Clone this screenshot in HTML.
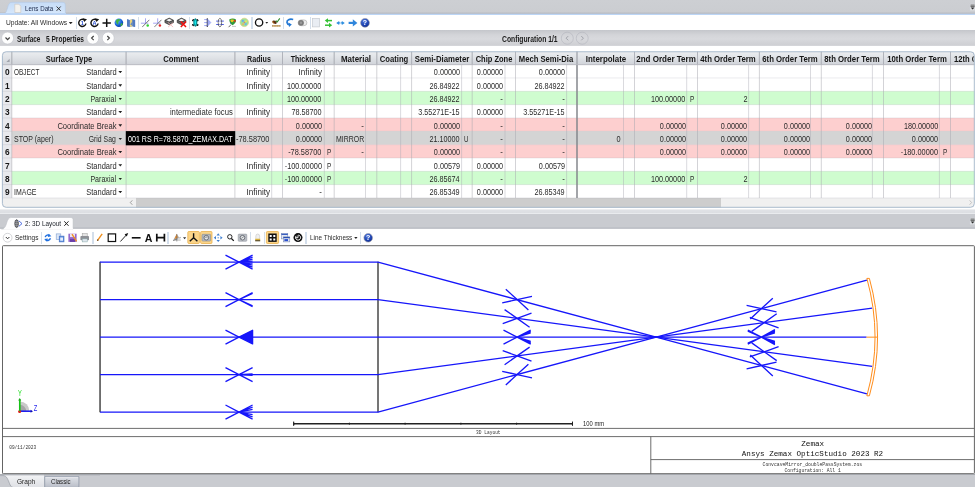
<!DOCTYPE html>
<html><head><meta charset="utf-8"><title>Lens Data</title>
<style>
html,body{margin:0;padding:0}
body{width:975px;height:487px;position:relative;overflow:hidden;background:#fff;font-family:"Liberation Sans", sans-serif}
.t{position:absolute;white-space:pre;line-height:12px;height:12px}
.sep{position:absolute;width:1.2px;background:#d3deeb}

.dd{position:absolute;width:3.8px;height:2.3px;background:#222;clip-path:polygon(0 0,100% 0,50% 100%)}
</style></head><body>
<div style="position:absolute;left:0;top:0;width:975px;height:14px;background:linear-gradient(#cdcfd3 0%,#cbcdd1 85%,#b9bcc2 94%,#b9bcc2 100%)"></div>
<svg style="position:absolute;left:0;top:0" width="80" height="15" viewBox="0 0 80 15">
<defs><linearGradient id="tg" x1="0" y1="0" x2="0" y2="1"><stop offset="0" stop-color="#c6dcf7"/><stop offset="1" stop-color="#d6e7fb"/></linearGradient></defs>
<path d="M2.5 14 C6 14 6.5 11 7.5 8 C8.5 4.5 9 2.3 12 2.3 L63 2.3 Q65.3 2.3 65.3 4.6 L65.3 14 Z" fill="url(#tg)" stroke="#b4c8e2" stroke-width="0.6"/>
<path d="M14.8 4.2h4l2 2v6.3h-6z" fill="#f4f2ee" stroke="#c9c5bd" stroke-width="0.6"/>
<path d="M56.6 6.5l4.1 4.3m0-4.3l-4.1 4.3" stroke="#2a2a2a" stroke-width="0.95" fill="none"/>
</svg>
<svg style="position:absolute;left:967.5px;top:2.6px" width="7.5" height="9" viewBox="0 0 7.5 9"><rect x="1.9" y="0.9" width="5.2" height="6.6" fill="#e3e5e8" opacity="0.7"/><path d="M2.5 2.1h4.2M2.5 3.4h4.2" stroke="#555" stroke-width="0.9"/><path d="M2.7 4.6h3.8l-1.9 2z" fill="#2a2a2a"/></svg>
<div style="position:absolute;left:0;top:13px;width:975px;height:17px;background:#fff;border-top:2px solid #bcd5f5;box-sizing:border-box"></div><div style="position:absolute;left:66px;top:13px;width:909px;height:1px;background:#b9c1cd"></div>
<div class="dd" style="left:68.8px;top:21.9px"></div>
<div class="sep" style="left:75.7px;top:16.5px;height:12.5px"></div>
<div class="sep" style="left:137.8px;top:16.5px;height:12.5px"></div>
<div class="sep" style="left:189.2px;top:16.5px;height:12.5px"></div>
<div class="sep" style="left:251.4px;top:16.5px;height:12.5px"></div>
<div class="sep" style="left:282.8px;top:16.5px;height:12.5px"></div>
<div class="sep" style="left:309.8px;top:16.5px;height:12.5px"></div>
<div style="position:absolute;left:0;top:30.2px;width:975px;height:15.8px;background:linear-gradient(#c4c6cb 0%,#d3d4d8 30%,#d8d9dd 55%,#cfd0d4 90%,#d6d7db 100%)"></div>
<svg style="position:absolute;left:0;top:30px" width="975" height="17" viewBox="0 30 975 17"><circle cx="7.6" cy="38.1" r="6.0" fill="#fefefe" stroke="#c3c5cb" stroke-width="0.6"/><path d="M5.5 37.5L7.6 39.6L9.7 37.5" fill="none" stroke="#444" stroke-width="1.2"/><circle cx="92.8" cy="38.1" r="6.0" fill="#fefefe" stroke="#c3c5cb" stroke-width="0.6"/><path d="M93.7 36.0L91.6 38.1L93.7 40.2" fill="none" stroke="#444" stroke-width="1.2"/><circle cx="108.2" cy="38.1" r="6.0" fill="#fefefe" stroke="#c3c5cb" stroke-width="0.6"/><path d="M107.3 36.0L109.4 38.1L107.3 40.2" fill="none" stroke="#444" stroke-width="1.2"/><circle cx="567.3" cy="38.2" r="6.0" fill="none" stroke="#b4b6bd" stroke-width="0.6"/><path d="M568.1999999999999 36.1L566.0999999999999 38.2L568.1999999999999 40.300000000000004" fill="none" stroke="#9a9ca3" stroke-width="0.9"/><circle cx="582.2" cy="38.2" r="6.0" fill="none" stroke="#b4b6bd" stroke-width="0.6"/><path d="M581.3000000000001 36.1L583.4000000000001 38.2L581.3000000000001 40.300000000000004" fill="none" stroke="#9a9ca3" stroke-width="0.9"/></svg>
<svg style="position:absolute;left:0;top:48px" width="975" height="162" viewBox="0 48 975 162">
<defs><clipPath id="tc"><rect x="2.0" y="51.35" width="972.7" height="156.35" rx="4" ry="4"/></clipPath><linearGradient id="hg" x1="0" y1="0" x2="0" y2="1"><stop offset="0" stop-color="#eceef1"/><stop offset="0.5" stop-color="#dfe2e6"/><stop offset="1" stop-color="#d0d3d9"/></linearGradient></defs>
<g clip-path="url(#tc)">
<rect x="2.00" y="51.35" width="972.70" height="156.35" fill="#fff" />
<rect x="2.00" y="51.35" width="972.70" height="13.30" fill="url(#hg)" />
<rect x="2.00" y="91.31" width="972.70" height="13.33" fill="#cffccf" />
<rect x="2.00" y="117.97" width="972.70" height="13.33" fill="#fdcfcf" />
<rect x="2.00" y="131.30" width="972.70" height="13.33" fill="#d4d4d4" />
<rect x="2.00" y="144.63" width="972.70" height="13.33" fill="#fdcfcf" />
<rect x="2.00" y="171.29" width="972.70" height="13.33" fill="#cffccf" />
<rect x="2.00" y="64.65" width="9.80" height="133.30" fill="#e8e9ed" />
<rect x="2.00" y="197.95" width="972.70" height="9.75" fill="#f0f0f0" />
<rect x="136.00" y="197.95" width="585.00" height="9.75" fill="#cdcdcd" />
<path d="M2.0 77.98H974.7M2.0 91.31H974.7M2.0 104.64H974.7M2.0 117.97H974.7M2.0 131.30H974.7M2.0 144.63H974.7M2.0 157.96H974.7M2.0 171.29H974.7M2.0 184.62H974.7M2.0 197.95H974.7" stroke="#9a9aa2" stroke-opacity="0.22" stroke-width="0.9" fill="none"/>
<path d="M11.8 51.35V197.95M126.1 51.35V197.95M234.9 51.35V197.95M282.5 51.35V197.95M334.2 51.35V197.95M376.8 51.35V197.95M411.6 51.35V197.95M472.2 51.35V197.95M515.5 51.35V197.95M634.5 51.35V197.95M697.5 51.35V197.95M759.4 51.35V197.95M821.3 51.35V197.95M883.5 51.35V197.95M950.5 51.35V197.95" stroke="#a8a8b0" stroke-opacity="0.5" stroke-width="1.0" fill="none"/>
<path d="M11.8 51.95V64.65M126.1 51.95V64.65M234.9 51.95V64.65M282.5 51.95V64.65M334.2 51.95V64.65M376.8 51.95V64.65M411.6 51.95V64.65M472.2 51.95V64.65M515.5 51.95V64.65M634.5 51.95V64.65M697.5 51.95V64.65M759.4 51.95V64.65M821.3 51.95V64.65M883.5 51.95V64.65M950.5 51.95V64.65" stroke="#a4a7af" stroke-opacity="0.6" stroke-width="1.0" fill="none"/>
<path d="M271.7 64.65V197.95M324.3 64.65V197.95M365.5 64.65V197.95M400.6 64.65V197.95M461.6 64.65V197.95M505.0 64.65V197.95M566.6 64.65V197.95M623.5 64.65V197.95M686.7 64.65V197.95M748.6 64.65V197.95M810.5 64.65V197.95M872.4 64.65V197.95M939.4 64.65V197.95" stroke="#a8a8b0" stroke-opacity="0.42" stroke-width="1.0" fill="none"/>
<path d="M577 51.35V64.65" stroke="#a0a3aa" stroke-width="1.3" fill="none"/><path d="M577 64.65V197.95" stroke="#85878d" stroke-width="1.5" fill="none"/>
<path d="M2.0 64.65H974.7" stroke="#b4b7be" stroke-width="0.9" fill="none"/>
<rect x="125.80" y="131.10" width="109.40" height="14.23" fill="#000" />
<path d="M132.3 200.35L130.3 202.55L132.3 204.75" stroke="#8a8a8a" stroke-width="0.8" fill="none"/><path d="M969.6 200.35L971.6 202.55L969.6 204.75" stroke="#b8b8b8" stroke-width="0.8" fill="none"/>
<path d="M9.6 62.05v-3.2l-3.2 3.2z" fill="#a0a3ab"/>
</g>
<rect x="2.4" y="51.75" width="971.9000000000001" height="155.54999999999998" rx="3.8" ry="3.8" fill="none" stroke="#a3b5c9" stroke-width="0.9"/>
</svg>
<div class="dd" style="left:118.4px;top:71.02px"></div>
<div class="dd" style="left:118.4px;top:84.35px"></div>
<div class="dd" style="left:118.4px;top:97.68px"></div>
<div class="dd" style="left:118.4px;top:111.01px"></div>
<div class="dd" style="left:118.4px;top:124.34px"></div>
<div class="dd" style="left:118.4px;top:137.66px"></div>
<div class="dd" style="left:118.4px;top:150.99px"></div>
<div class="dd" style="left:118.4px;top:164.32px"></div>
<div class="dd" style="left:118.4px;top:177.66px"></div>
<div class="dd" style="left:118.4px;top:190.98px"></div>
<svg style="position:absolute;left:0;top:208px" width="975" height="22" viewBox="0 208 975 22"><defs><linearGradient id="bg2" x1="0" y1="0" x2="0" y2="1"><stop offset="0" stop-color="#e6e8eb"/><stop offset="0.3" stop-color="#dfe1e5"/><stop offset="1" stop-color="#dcdee2"/></linearGradient></defs><rect x="0" y="209.3" width="975" height="4" fill="url(#bg2)"/><rect x="0" y="213.0" width="975" height="0.9" fill="#f2f3f5"/><rect x="0" y="213.8" width="975" height="14.8" fill="#c9cbd0"/><rect x="0" y="227.6" width="975" height="1" fill="#b2b5bb"/></svg>
<svg style="position:absolute;left:0;top:213px" width="90" height="17" viewBox="0 213 90 17">
<path d="M1.5 229 C4.6 229 5.6 226.4 6.6 223.2 C7.6 220 8.4 217.5 11.4 217.5 L71 217.5 Q73.1 217.5 73.1 219.6 L73.1 229 Z" fill="#fdfdfe" stroke="#b9bcc2" stroke-width="0.5"/>
<rect x="4.2" y="227.9" width="68.6" height="1.6" fill="#fdfdfe"/>
<ellipse cx="16.6" cy="223.6" rx="1.8" ry="3.9" fill="#77797f" stroke="#2f3136" stroke-width="0.7"/>
<path d="M15.2 221.6h2.8M15 223.6h3.2M15.2 225.6h2.8" stroke="#c4c6ca" stroke-width="0.4"/>
<path d="M18.8 220.8L22 223.6L18.8 226.4" fill="none" stroke="#3d5fe0" stroke-width="0.9"/>
<path d="M64.3 221.3l4.2 4.5m0-4.5l-4.2 4.5" stroke="#222" stroke-width="1.0" fill="none"/>
</svg>
<svg style="position:absolute;left:967.5px;top:217.2px" width="7.5" height="9" viewBox="0 0 7.5 9"><rect x="1.9" y="0.9" width="5.2" height="6.6" fill="#e3e5e8" opacity="0.7"/><path d="M2.5 2.1h4.2M2.5 3.4h4.2" stroke="#555" stroke-width="0.9"/><path d="M2.7 4.6h3.8l-1.9 2z" fill="#2a2a2a"/></svg>
<div class="dd" style="left:354px;top:236.8px"></div>
<div class="sep" style="left:40.6px;top:231.5px;height:12.5px"></div>
<div class="sep" style="left:92.4px;top:231.5px;height:12.5px"></div>
<div class="sep" style="left:167.4px;top:231.5px;height:12.5px"></div>
<div class="sep" style="left:250.0px;top:231.5px;height:12.5px"></div>
<div class="sep" style="left:264.0px;top:231.5px;height:12.5px"></div>
<div class="sep" style="left:305.4px;top:231.5px;height:12.5px"></div>
<div class="sep" style="left:359.8px;top:231.5px;height:12.5px"></div>
<svg style="position:absolute;left:0;top:240px;will-change:transform" width="975" height="240" viewBox="0 240 975 240">
<rect x="2.5" y="245.7" width="971.9" height="228" rx="0.8" fill="#fff" stroke="#5c5c5c" stroke-width="0.95"/>
<path d="M2.6 428.4H974.4M2.6 436.6H974.4M650.8 436.6V473.7M650.8 459.6H974.4" stroke="#5c5c5c" stroke-width="0.9" fill="none"/>
<path d="M100.05 261.84999999999997V412.35M378.0 261.84999999999997V412.35" stroke="#484848" stroke-width="1.5" fill="none"/>
<g stroke="#1616fa" stroke-width="1.3" fill="none" stroke-linecap="butt" stroke-linejoin="round">
<path d="M100.05 262.15H378.0L656.2 337.1L866.9 280.2"/>
<path d="M100.05 299.65H378.0L656.2 337.1L872.2 308.1"/>
<path d="M100.05 337.15H378.0L656.2 337.1L866.5 337.15"/>
<path d="M100.05 374.65H378.0L656.2 337.1L872.2 366.4"/>
<path d="M100.05 412.05H378.0L656.2 337.1L866.9 393.9"/>
<path d="M239.0 262.1L225.5 269.2M239.0 262.1L225.5 255.1"/>
<path d="M239.0 262.1L252.6 269.2M239.0 262.1L252.6 255.1M239.0 262.1L252.6 267.1M239.0 262.1L252.6 257.2M239.0 262.1L252.6 265.1M239.0 262.1L252.6 259.2M239.0 262.1L252.6 263.2M239.0 262.1L252.6 261.1"/>
<path d="M517.1 299.6L502.2 302.9M517.1 299.6L505.8 289.3"/>
<path d="M517.1 299.6L528.4 310.0M517.1 299.6L532.0 296.3"/>
<path d="M761.5 308.6L750.3 319.0M761.5 308.6L746.6 305.4"/>
<path d="M761.5 308.6L776.5 311.9M761.5 308.6L772.8 298.3"/>
<path d="M239.0 299.6L225.5 306.7M239.0 299.6L225.5 292.6"/>
<path d="M239.0 299.6L252.6 306.7M239.0 299.6L252.6 292.6M239.0 299.6L252.6 305.9M239.0 299.6L252.6 293.4"/>
<path d="M517.1 318.4L502.7 323.6M517.1 318.4L504.6 309.6"/>
<path d="M517.1 318.4L529.6 327.2M517.1 318.4L531.5 313.2"/>
<path d="M764.2 322.6L751.7 331.4M764.2 322.6L749.8 317.4"/>
<path d="M764.2 322.6L778.6 327.8M764.2 322.6L776.7 313.8"/>
<path d="M239.0 337.1L225.5 344.2M239.0 337.1L225.5 330.1"/>
<path d="M239.0 337.1L252.6 330.3V343.9Z" fill="#1616fa"/>
<path d="M517.1 337.1L503.5 344.2M517.1 337.1L503.5 330.1"/>
<path d="M517.1 337.1L530.7 344.2M517.1 337.1L530.7 330.1M517.1 337.1L530.7 343.5M517.1 337.1L530.7 330.8M517.1 337.1L530.7 342.8M517.1 337.1L530.7 331.5M517.1 337.1L530.7 342.1M517.1 337.1L530.7 332.2M517.1 337.1L530.7 341.4M517.1 337.1L530.7 332.9"/>
<path d="M761.4 337.1L747.8 344.2M761.4 337.1L747.8 330.1M761.4 337.1L747.8 343.6M761.4 337.1L747.8 330.6M761.4 337.1L747.8 343.1M761.4 337.1L747.8 331.2"/>
<path d="M761.4 337.1L774.9 344.8M761.4 337.1L774.9 329.5M761.4 337.1L774.9 344.2M761.4 337.1L774.9 330.1M761.4 337.1L774.9 343.5M761.4 337.1L774.9 330.8M761.4 337.1L774.9 342.8M761.4 337.1L774.9 331.5M761.4 337.1L774.9 342.1M761.4 337.1L774.9 332.2M761.4 337.1L774.9 341.4M761.4 337.1L774.9 332.9"/>
<path d="M239.0 374.6L225.5 381.7M239.0 374.6L225.5 367.6"/>
<path d="M239.0 374.6L252.6 381.7M239.0 374.6L252.6 367.6M239.0 374.6L252.6 375.4M239.0 374.6L252.6 373.9"/>
<path d="M517.1 355.9L504.6 364.7M517.1 355.9L502.7 350.7"/>
<path d="M517.1 355.9L531.5 361.1M517.1 355.9L529.6 347.1"/>
<path d="M764.2 351.8L749.8 356.9M764.2 351.8L751.7 342.9"/>
<path d="M764.2 351.8L776.7 360.6M764.2 351.8L778.6 346.6"/>
<path d="M239.0 412.1L225.5 419.1M239.0 412.1L225.5 405.0"/>
<path d="M239.0 412.1L252.6 419.1M239.0 412.1L252.6 405.0M239.0 412.1L252.6 416.9M239.0 412.1L252.6 407.2M239.0 412.1L252.6 414.7M239.0 412.1L252.6 409.4"/>
<path d="M517.1 374.6L505.8 384.9M517.1 374.6L502.2 371.3"/>
<path d="M517.1 374.6L532.0 377.9M517.1 374.6L528.4 364.2"/>
<path d="M761.5 365.5L746.6 368.8M761.5 365.5L750.3 355.1"/>
<path d="M761.5 365.5L772.8 375.9M761.5 365.5L776.5 362.2"/>
</g>
<path d="M647.2 337.1L652.2 336.20000000000005L656.2 337.1L660.2 336.20000000000005L665.2 337.1L660.2 338.0L656.2 337.1L652.2 338.0Z" fill="#1616fa" opacity="0.9"/>
<g stroke="#ff8c1a" stroke-width="1.0" fill="none"><path d="M866.89 278.40A219.0 219.0 0 0 1 866.89 395.80"/><path d="M869.39 278.40A219.0 219.0 0 0 1 869.39 395.80"/>
<path d="M866.89 278.40h2.5M866.89 395.80h2.5M866.5 337.15H877.4"/></g>
<path d="M293.6 423.7H572.6" stroke="#222" stroke-width="1.4" fill="none"/><path d="M293.7 421.6v4.2M572.5 421.6v4.2M349.4 422.7v2M405.1 422.7v2M460.9 422.7v2M516.6 422.7v2" stroke="#222" stroke-width="1.0" fill="none"/><path d="M572.9 421.5v4.4l-1.6-2.2zM293.3 421.5v4.4l1.6-2.2z" fill="#222"/>
<path d="M19.8 411.2 L19.8 401.5 A9.6 9.6 0 0 1 29.4 411.2Z" fill="#c9c9c9"/><path d="M19.8 411.2 L19.8 404.8 A6.4 6.4 0 0 1 26.2 411.2Z" fill="#a5a5a5"/>
<path d="M19.7 411.2V399.5" stroke="#19c219" stroke-width="1.5"/><path d="M18.2 400.4L19.7 398L21.2 400.4Z" fill="#159a15"/>
<path d="M19.7 411.2H31.2" stroke="#1414f0" stroke-width="1.5"/><path d="M30.6 409.7L33 411.2L30.6 412.7Z" fill="#0e0eb0"/>
<circle cx="19.6" cy="411.6" r="1.5" fill="#e01515"/><path d="M19.7 411.2V399.5" stroke="#19c219" stroke-width="1.3"/>
<text x="18.1" y="395.7" font-family="Liberation Sans, sans-serif" font-size="9" fill="#22dd22" textLength="3.8" lengthAdjust="spacingAndGlyphs">Y</text>
<text x="33.8" y="410.8" font-family="Liberation Sans, sans-serif" font-size="9" fill="#2a2aee" textLength="3.5" lengthAdjust="spacingAndGlyphs">Z</text>
<text x="583.1" y="425.7" font-family="Liberation Sans, sans-serif" font-size="6.4" fill="#222" textLength="21" lengthAdjust="spacingAndGlyphs">100 mm</text>
<text x="476.0" y="434.2" font-family="Liberation Mono, monospace" font-size="4.6" text-anchor="start" fill="#333" textLength="24.6" lengthAdjust="spacingAndGlyphs" xml:space="preserve">3D Layout</text>
<text x="9.2" y="449.0" font-family="Liberation Mono, monospace" font-size="4.6" text-anchor="start" fill="#333" textLength="27.0" lengthAdjust="spacingAndGlyphs" xml:space="preserve">09/11/2023</text>
<text x="801.2" y="445.6" font-family="Liberation Mono, monospace" font-size="7.6" text-anchor="start" fill="#111" textLength="23.0" lengthAdjust="spacingAndGlyphs" xml:space="preserve">Zemax</text>
<text x="741.8" y="455.9" font-family="Liberation Mono, monospace" font-size="7.6" text-anchor="start" fill="#111" textLength="141.4" lengthAdjust="spacingAndGlyphs" xml:space="preserve">Ansys Zemax OpticStudio 2023 R2</text>
<text x="762.6" y="465.7" font-family="Liberation Mono, monospace" font-size="4.7" text-anchor="start" fill="#333" textLength="99.5" lengthAdjust="spacingAndGlyphs" xml:space="preserve">ConvcaveMirror_doublePassSystem.zos</text>
<text x="784.5" y="471.7" font-family="Liberation Mono, monospace" font-size="4.7" text-anchor="start" fill="#333" textLength="56.3" lengthAdjust="spacingAndGlyphs" xml:space="preserve">Configuration: All 1</text>
</svg>
<div style="position:absolute;left:0;top:474px;width:975px;height:13px;background:#c9cbd0;border-top:1px solid #a4a7ad;box-sizing:border-box"></div>
<svg style="position:absolute;left:0;top:474px" width="100" height="13" viewBox="0 474 100 13">
<defs><linearGradient id="tg3" x1="0" y1="0" x2="0" y2="1"><stop offset="0" stop-color="#f3f4f6"/><stop offset="1" stop-color="#dfe1e5"/></linearGradient>
<linearGradient id="tg4" x1="0" y1="0" x2="0" y2="1"><stop offset="0" stop-color="#dfe2e8"/><stop offset="1" stop-color="#b9bec8"/></linearGradient></defs>
<path d="M0 475.6 L3 475.6 C7 475.6 8 480 9.5 483.5 C10.3 485.6 11 487 12.5 487 L44 487 L44 474.6 L0 474.6Z" fill="url(#tg3)"/>
<path d="M0 475.6 L3 475.6 C7 475.6 8 480 9.5 483.5 C10.3 485.6 11 487 12.5 487" fill="none" stroke="#8e939c" stroke-width="0.6"/>
<path d="M44.7 476.6 H78.9 V487.4 H44.7 Z" fill="url(#tg4)" stroke="#8790a2" stroke-width="0.7"/><path d="M45.5 477.4H78.1" stroke="#eef0f4" stroke-width="0.6"/><rect x="0" y="474.2" width="100" height="1.1" fill="#a4a7ad"/>
</svg>
<svg style="position:absolute;left:0;top:14px;will-change:transform" width="975" height="17" viewBox="0 14 975 17">
<defs><radialGradient id="gl" cx="0.35" cy="0.3" r="0.8"><stop offset="0" stop-color="#6fb4ff"/><stop offset="0.6" stop-color="#1560d8"/><stop offset="1" stop-color="#0a2f8c"/></radialGradient><radialGradient id="hp" cx="0.4" cy="0.3" r="0.8"><stop offset="0" stop-color="#4f79e0"/><stop offset="0.7" stop-color="#153aa8"/><stop offset="1" stop-color="#0a1f6e"/></radialGradient></defs>
<path d="M84.5 20.0A3.6 3.6 0 1 0 85.89999999999999 23.5" fill="none" stroke="#111" stroke-width="1.45"/>
<path d="M82.89999999999999 18.299999999999997L87.0 19.299999999999997L84.2 22.0Z" fill="#111"/>
<text x="82.3" y="25.0" font-family="Liberation Sans, sans-serif" font-size="5.6" font-weight="bold" text-anchor="middle" fill="#2b4fd0">1</text>
<path d="M96.7 20.0A3.6 3.6 0 1 0 98.1 23.5" fill="none" stroke="#111" stroke-width="1.45"/>
<path d="M95.1 18.299999999999997L99.2 19.299999999999997L96.4 22.0Z" fill="#111"/>
<text x="94.5" y="25.0" font-family="Liberation Sans, sans-serif" font-size="5.6" font-weight="bold" text-anchor="middle" fill="#2b4fd0">A</text>
<path d="M102.5 22.9H110.9M106.7 18.7V27.1" stroke="#111" stroke-width="1.5"/>
<circle cx="118.9" cy="22.8" r="4.3" fill="url(#gl)"/><path d="M116.3 20.2c1-1.2 2.6-1.4 3.6-0.6c0.4 1-0.6 1.6-1.4 2.2c-0.6 0.8 0.4 1.8-0.4 2.8c-1-0.2-1.2-1.4-1.8-2.2c-0.6-0.6-0.6-1.4 0-2.2zM120.8 23.4c0.8-0.4 1.8 0 1.9 0.8c-0.3 1-1 1.7-1.8 1.9c-0.5-0.8-0.5-1.9-0.1-2.7z" fill="#3fb443"/>
<path d="M127 19.2l2.7 0.9l2.7-0.9l2.7 0.9v7l-2.7-0.9l-2.7 0.9l-2.7-0.9z" fill="#6a90cf"/><path d="M129.7 20.1l2.7-0.9v7l-2.7 0.9z" fill="#e9d37c"/><path d="M127 19.2l2.7 0.9v7l-2.7-0.9zM132.4 19.2l2.7 0.9v7l-2.7-0.9z" fill="#4f78bf" opacity="0.9"/><path d="M130.3 24.5l1.5-2.6v3.6z" fill="#4a7fd0"/>
<path d="M140.9 23.2H148.29999999999998M145.5 18.3V23.2" stroke="#9c9cf2" stroke-width="0.9" fill="none"/><path d="M142.2 26.9L149.2 19.8" stroke="#555" stroke-width="0.7"/><path d="M142.7 27.2L149.7 20.1" stroke="#c8c8c8" stroke-width="0.6"/>
<circle cx="147.7" cy="25.4" r="1.25" fill="#2fd02f"/>
<path d="M153.10000000000002 23.2H160.5M157.70000000000002 18.3V23.2" stroke="#9c9cf2" stroke-width="0.9" fill="none"/><path d="M154.4 26.9L161.4 19.8" stroke="#555" stroke-width="0.7"/><path d="M154.9 27.2L161.9 20.1" stroke="#c8c8c8" stroke-width="0.6"/>
<circle cx="159.9" cy="25.4" r="1.25" fill="#e02a2a"/>
<path d="M164.9 20.2L169.20000000000002 18.1L173.5 20.2V22.6L169.20000000000002 24.7L164.9 22.6Z" fill="#4a4a4a" stroke="#2e2e2e" stroke-width="0.6"/><path d="M166.20000000000002 20.2L169.20000000000002 18.8L172.20000000000002 20.2L169.20000000000002 21.6Z" fill="#f4f4f4"/><path d="M165.5 21.6L169.20000000000002 23.4L172.9 21.6" stroke="#9a9a9a" stroke-width="0.5" fill="none"/>
<path d="M168.1 22.6L173.1 27M173.1 22.6L168.1 27" stroke="#f4b4b4" stroke-width="0.8"/>
<path d="M177.2 20.2L181.5 18.1L185.79999999999998 20.2V22.6L181.5 24.7L177.2 22.6Z" fill="#4a4a4a" stroke="#2e2e2e" stroke-width="0.6"/><path d="M178.5 20.2L181.5 18.8L184.5 20.2L181.5 21.6Z" fill="#f4f4f4"/><path d="M177.79999999999998 21.6L181.5 23.4L185.2 21.6" stroke="#9a9a9a" stroke-width="0.5" fill="none"/>
<path d="M180.79999999999998 21.6L186.0 27.1M186.0 21.6L180.79999999999998 27.1" stroke="#ee1111" stroke-width="1.5"/>
<path d="M193 21.2l-0.6-1.2l1.4-0.6zM197.6 21.2l0.6-1.2l-1.4-0.6zM193 24l-0.6 1.2l1.4 0.6zM197.6 24l0.6 1.2l-1.4 0.6z" fill="#111" stroke="#111" stroke-width="0.9"/><path d="M195.3 17.9L197.3 20.6V24.4L195.3 27L193.3 24.4V20.6Z" fill="#0a8f92"/><ellipse cx="195.3" cy="22.5" rx="0.8" ry="2.4" fill="#19e8ee"/>
<path d="M204.2 19.6H207.4M204.2 22.6H207.4M204.2 25.6H207.4" stroke="#8f9af4" stroke-width="0.9"/><path d="M207.3 18.3V27" stroke="#3a3a44" stroke-width="1.1"/><path d="M207.9 19.4L210.9 22.6L207.9 25.8Z" fill="#aab4f6" stroke="#7f8cf0" stroke-width="0.5"/>
<path d="M216.2 21.1H223.8M216.2 24.5H223.8" stroke="#4a5ae0" stroke-width="1.0"/><ellipse cx="219.9" cy="22.6" rx="1.7" ry="4.3" fill="none" stroke="#555" stroke-width="0.8"/><ellipse cx="219.9" cy="22.6" rx="1.0" ry="3.4" fill="#f4f4f8" opacity="0.55"/>
<path d="M229.2 19.6c2-1.2 4.8-1.4 6.8 0c0.4 2.2-1 4.6-3.4 5.6c-1.6-0.6-3.2-2.8-3.4-5.6z" fill="#2e9a3a"/><path d="M230.4 20c1.2-0.6 2.6-0.6 3.6 0c-0.2 1.2-1 2-1.9 2.2c-0.9-0.3-1.6-1.1-1.7-2.2z" fill="#f0c020"/><path d="M233.8 20.2c0.8-0.3 1.6-0.2 2 0.2c-0.1 0.9-0.6 1.6-1.2 2z" fill="#e03020"/><path d="M229.6 21.4c0.5 1 1 1.6 1.6 2l-0.6 0.6z" fill="#2050d0"/><path d="M231 24.6L228.6 27.2" stroke="#555" stroke-width="0.9"/><path d="M232 26.4H236" stroke="#b0b0b0" stroke-width="0.7"/>
<circle cx="244.3" cy="22.4" r="4.2" fill="#9be29b" stroke="#dcd080" stroke-width="0.7"/><circle cx="242.8" cy="20.9" r="1.1" fill="#6aa8f0"/><circle cx="246" cy="21.2" r="1.0" fill="#f0e060"/><circle cx="243" cy="24.2" r="1.0" fill="#f0b060"/><circle cx="245.8" cy="24.2" r="1.1" fill="#70b8e8"/><circle cx="244.4" cy="22.5" r="0.8" fill="#f07070"/>
<circle cx="259.1" cy="22.5" r="3.65" fill="none" stroke="#111" stroke-width="1.35"/><path d="M265.4 22h2.8l-1.4 1.7z" fill="#222"/>
<path d="M272 25.9H280.6" stroke="#c9923a" stroke-width="1.3"/><path d="M272 25.9H280.6" stroke="#8a8a8a" stroke-width="1.3" stroke-dasharray="1.2 1.2" opacity="0.6"/><ellipse cx="274.5" cy="22.2" rx="2.4" ry="1.5" transform="rotate(25 274.5 22.2)" fill="#5a2f14"/><path d="M272.6 21.2l1.2 2.6" stroke="#e88a2a" stroke-width="0.7"/><path d="M275.8 20.6L277.2 22L279.8 18.4" fill="none" stroke="#2f8a2f" stroke-width="1.1"/>
<path d="M293.2 19.5C289.5 18.6 286.6 20 287 22.6C287.3 24 288.4 24.6 289.4 24.6" fill="none" stroke="#2378d4" stroke-width="1.7"/><path d="M288.4 22.4L291.8 24.4L289 27Z" fill="#2378d4"/>
<rect x="298.1" y="19.9" width="8.8" height="5.8" rx="2.9" fill="#ececec" stroke="#a8a8a8" stroke-width="0.6"/><circle cx="301" cy="22.8" r="2.9" fill="#7a7a7a"/><circle cx="301" cy="22.8" r="1.2" fill="#9a9a9a"/>
<rect x="312.6" y="18.5" width="6.8" height="8.4" fill="#e9edf3" stroke="#c5c9d0" stroke-width="0.7"/>
<path d="M332 20.6H327.2" stroke="#34c034" stroke-width="1.5"/><path d="M328 18.2L324.8 20.6L328 23Z" fill="#34c034"/><path d="M325 25.2H329.8" stroke="#34c034" stroke-width="1.5"/><path d="M329 22.8L332.2 25.2L329 27.6Z" fill="#34c034"/>
<path d="M338.4 22.9H342.6" stroke="#2f8fe0" stroke-width="1.3"/><path d="M339.2 20.9L336.2 22.9L339.2 24.9ZM341.8 20.9L344.8 22.9L341.8 24.9Z" fill="#2f8fe0"/><circle cx="340.5" cy="22.9" r="0.7" fill="#fff"/>
<path d="M348.6 22.9H353.6" stroke="#2f86dc" stroke-width="2.2"/><path d="M352.8 19.2L357.4 22.9L352.8 26.6Z" fill="#2f86dc"/>
<circle cx="365" cy="22.8" r="4.4" fill="url(#hp)" stroke="#9a9aa8" stroke-width="0.6"/><text x="365" y="25.4" font-family="Liberation Sans, sans-serif" font-size="7" font-weight="bold" text-anchor="middle" fill="#fff">?</text>
</svg>
<svg style="position:absolute;left:0;top:229px;will-change:transform" width="975" height="17" viewBox="0 229 975 17">
<circle cx="7.6" cy="237.7" r="4.4" fill="#fff" stroke="#c2c3c7" stroke-width="0.7"/><path d="M5.8 237.0L7.6 238.79999999999998L9.4 237.0" fill="none" stroke="#333" stroke-width="1.0"/>
<path d="M45.2 237.1A3 3 0 0 1 49.8 235.5" fill="none" stroke="#1f6fe0" stroke-width="1.5"/><path d="M48.6 233.7L51.4 236.29999999999998L47.8 236.89999999999998Z" fill="#1f6fe0"/><path d="M50.4 238.29999999999998A3 3 0 0 1 45.8 239.89999999999998" fill="none" stroke="#1f6fe0" stroke-width="1.5"/><path d="M47 241.7L44.2 239.1L47.8 238.5Z" fill="#1f6fe0"/>
<rect x="56.2" y="233.89999999999998" width="4.6" height="5.6" fill="#dfe8f6" stroke="#7f9fd0" stroke-width="0.6"/><rect x="59.2" y="236.1" width="4.8" height="5.8" fill="#5f8fe0" stroke="#3f6fc0" stroke-width="0.6"/><rect x="60.2" y="237.5" width="2.8" height="3.2" fill="#e8f0fc"/>
<rect x="68.4" y="233.7" width="8.2" height="8.2" fill="#9468cc"/><rect x="70" y="233.7" width="5" height="3.4" fill="#ece6f4"/><rect x="70" y="239.1" width="5" height="2.8" fill="#6a3fa8"/><path d="M72 234.1L76.6 241.29999999999998" stroke="#f09020" stroke-width="1.3"/>
<rect x="82.2" y="233.7" width="5" height="3" fill="#e4e4e4" stroke="#999" stroke-width="0.5"/><rect x="80.4" y="236.1" width="8.6" height="4.2" rx="0.8" fill="#8d9096"/><rect x="82.2" y="238.89999999999998" width="5" height="3" fill="#dfe6ee" stroke="#8aa" stroke-width="0.5"/>
<path d="M97.4 240.6L102.2 233.79999999999998" stroke="#f0901e" stroke-width="1.4"/><path d="M97.4 240.6l0.7-1" stroke="#5a3a1a" stroke-width="1.2"/>
<rect x="108.2" y="233.89999999999998" width="7.4" height="7.6" fill="none" stroke="#111" stroke-width="1.2"/>
<path d="M120.4 241.5L126.6 234.7" stroke="#111" stroke-width="0.9"/><path d="M128.2 233.1L124.6 234.29999999999998L126.8 236.5Z" fill="#111"/>
<path d="M131.8 237.79999999999998H140.6" stroke="#111" stroke-width="1.6"/>
<text x="148.7" y="241.6" font-family="Liberation Sans, sans-serif" font-size="10.6" font-weight="bold" text-anchor="middle" fill="#111">A</text>
<path d="M156.8 233.79999999999998V241.6M164.4 233.79999999999998V241.6M156.8 237.7H164.4" stroke="#111" stroke-width="1.7" fill="none"/>
<path d="M176.8 233.7L173 240.5L180.8 240.5Z" fill="#a8a8a8"/><path d="M176.8 233.7L174.6 238.7L177.6 237.89999999999998Z" fill="#f08a1e"/><path d="M176.8 234.1V241.5M173 240.7L180.8 237.29999999999998" stroke="#6a6a6a" stroke-width="0.6"/><circle cx="179" cy="239.1" r="1.6" fill="#d8d8d8"/>
<path d="M183 237.29999999999998h3.2l-1.6 2z" fill="#333"/>
<rect x="187.8" y="231.5" width="11.6" height="12" rx="1" fill="#fbd58a" stroke="#e8ab3c" stroke-width="0.7"/>
<path d="M193.6 233.29999999999998V237.7M193.6 237.7L189.8 241.29999999999998M193.6 237.7L197.4 241.29999999999998" stroke="#111" stroke-width="1.4" fill="none"/>
<rect x="200.6" y="231.5" width="11.4" height="12" rx="1" fill="#fbd58a" stroke="#e8ab3c" stroke-width="0.7"/>
<rect x="202" y="234.29999999999998" width="8.6" height="6.8" rx="0.8" fill="#b4b9c0" stroke="#7a7e86" stroke-width="0.5"/><circle cx="206.3" cy="237.7" r="2.3" fill="#e4e7ea" stroke="#4a4e56" stroke-width="0.7"/><path d="M205.2 237.7a1.2 1.2 0 0 1 2.2 0" fill="none" stroke="#444" stroke-width="0.6"/>
<path d="M218.2 233.29999999999998L219.89999999999998 235.5H216.5ZM218.2 242.1L219.89999999999998 239.89999999999998H216.5ZM213.79999999999998 237.7L216.0 236.0V239.39999999999998ZM222.6 237.7L220.39999999999998 236.0V239.39999999999998Z" fill="#3f7fd0"/><circle cx="218.2" cy="237.7" r="0.8" fill="#7aa8e0"/>
<circle cx="229.8" cy="236.79999999999998" r="2.2" fill="none" stroke="#111" stroke-width="0.9"/><path d="M231.4 238.5L233.8 240.89999999999998" stroke="#111" stroke-width="1.2"/>
<rect x="238.2" y="234.1" width="8.6" height="7.2" rx="0.8" fill="#b9bdc4" stroke="#8a8e96" stroke-width="0.5"/><circle cx="242.5" cy="237.7" r="2.3" fill="#e6e9ec" stroke="#4a4e56" stroke-width="0.7"/><path d="M241.2 238.5L243.8 236.7" stroke="#555" stroke-width="0.6"/>
<path d="M255.8 238.7V236.29999999999998A1.9 2.3 0 0 1 259.6 236.29999999999998V238.7" fill="#f0f0f0" stroke="#c4c4c4" stroke-width="0.6"/><rect x="255.2" y="238.7" width="5" height="1.7" fill="#d6ae3a"/><rect x="255.2" y="240.2" width="5" height="1.1" fill="#4a3c14"/>
<rect x="266.4" y="231.5" width="12.2" height="12" rx="1" fill="#fbd58a" stroke="#e8ab3c" stroke-width="0.7"/>
<rect x="268.3" y="233.5" width="8.4" height="8.4" fill="#111"/><path d="M269.7 234.89999999999998h2v2h-2zM273.3 234.89999999999998h2v2h-2zM269.7 238.5h2v2h-2zM273.3 238.5h2v2h-2z" fill="#fff"/>
<rect x="281.4" y="233.7" width="6.4" height="5.2" fill="#e4e9f4" stroke="#6a7fb0" stroke-width="0.5"/><rect x="281.4" y="233.7" width="6.4" height="1.3" fill="#3a5fc0"/><rect x="283.4" y="236.89999999999998" width="6.4" height="5" fill="#dfe4f0" stroke="#6a7fb0" stroke-width="0.5"/><rect x="283.4" y="236.89999999999998" width="6.4" height="1.3" fill="#2a4fb0"/><rect x="284.4" y="239.1" width="3.6" height="2" fill="#2a4fd0"/>
<circle cx="298" cy="237.6" r="4.5" fill="#111"/><path d="M296.2 235.89999999999998A2.5 2.5 0 1 0 298.4 235.1" fill="none" stroke="#fff" stroke-width="1"/><path d="M298 235.29999999999998V237.7H296" fill="none" stroke="#fff" stroke-width="0.9"/>
<circle cx="368.2" cy="237.79999999999998" r="4.3" fill="url(#hp)" stroke="#9a9aa8" stroke-width="0.6"/><text x="368.2" y="240.39999999999998" font-family="Liberation Sans, sans-serif" font-size="7" font-weight="bold" text-anchor="middle" fill="#fff">?</text>
</svg>
<div style="position:absolute;left:0;top:0;width:975px;height:487px;will-change:transform">
<span class="t" id="t0" style="font-size:8.1px;color:#1c2a4c;left:25.00px;transform-origin:0 50%;transform:scaleX(0.7668);top:2.70px;">Lens Data</span>
<span class="t" id="t1" style="font-size:8.1px;color:#2b2b2b;left:5.60px;transform-origin:0 50%;transform:scaleX(0.8231);top:16.90px;">Update: All Windows</span>
<span class="t" id="t2" style="font-size:8.3px;color:#1a1a1a;font-weight:bold;left:16.60px;transform-origin:0 50%;transform:scaleX(0.7688);top:32.60px;">Surface</span>
<span class="t" id="t3" style="font-size:8.3px;color:#1a1a1a;font-weight:bold;left:45.80px;transform-origin:0 50%;transform:scaleX(0.7922);top:32.60px;">5 Properties</span>
<span class="t" id="t4" style="font-size:8.3px;color:#1a1a1a;font-weight:bold;left:502.40px;transform-origin:0 50%;transform:scaleX(0.8150);top:32.50px;">Configuration 1/1</span>
<span class="t" id="t5" style="font-size:8.3px;color:#161616;font-weight:bold;left:69.00px;transform:translateX(-50%) scaleX(0.9010);top:52.70px;">Surface Type</span>
<span class="t" id="t6" style="font-size:8.3px;color:#161616;font-weight:bold;left:180.60px;transform:translateX(-50%) scaleX(0.9277);top:52.70px;">Comment</span>
<span class="t" id="t7" style="font-size:8.3px;color:#161616;font-weight:bold;left:258.70px;transform:translateX(-50%) scaleX(0.8601);top:52.70px;">Radius</span>
<span class="t" id="t8" style="font-size:8.3px;color:#161616;font-weight:bold;left:308.35px;transform:translateX(-50%) scaleX(0.8523);top:52.70px;">Thickness</span>
<span class="t" id="t9" style="font-size:8.3px;color:#161616;font-weight:bold;left:355.55px;transform:translateX(-50%) scaleX(0.9567);top:52.70px;">Material</span>
<span class="t" id="t10" style="font-size:8.3px;color:#161616;font-weight:bold;left:394.15px;transform:translateX(-50%) scaleX(0.9226);top:52.70px;">Coating</span>
<span class="t" id="t11" style="font-size:8.3px;color:#161616;font-weight:bold;left:441.85px;transform:translateX(-50%) scaleX(0.9379);top:52.70px;">Semi-Diameter</span>
<span class="t" id="t12" style="font-size:8.3px;color:#161616;font-weight:bold;left:494.00px;transform:translateX(-50%) scaleX(0.9023);top:52.70px;">Chip Zone</span>
<span class="t" id="t13" style="font-size:8.3px;color:#161616;font-weight:bold;left:545.85px;transform:translateX(-50%) scaleX(0.9232);top:52.70px;">Mech Semi-Dia</span>
<span class="t" id="t14" style="font-size:8.3px;color:#161616;font-weight:bold;left:606.10px;transform:translateX(-50%) scaleX(0.9547);top:52.70px;">Interpolate</span>
<span class="t" id="t15" style="font-size:8.3px;color:#161616;font-weight:bold;left:666.10px;transform:translateX(-50%) scaleX(0.9669);top:52.70px;">2nd Order Term</span>
<span class="t" id="t16" style="font-size:8.3px;color:#161616;font-weight:bold;left:728.45px;transform:translateX(-50%) scaleX(0.9355);top:52.70px;">4th Order Term</span>
<span class="t" id="t17" style="font-size:8.3px;color:#161616;font-weight:bold;left:790.35px;transform:translateX(-50%) scaleX(0.9355);top:52.70px;">6th Order Term</span>
<span class="t" id="t18" style="font-size:8.3px;color:#161616;font-weight:bold;left:852.40px;transform:translateX(-50%) scaleX(0.9355);top:52.70px;">8th Order Term</span>
<span class="t" id="t19" style="font-size:8.3px;color:#161616;font-weight:bold;left:917.00px;transform:translateX(-50%) scaleX(0.9322);top:52.70px;">10th Order Term</span>
<span class="t" id="t20" style="font-size:8.3px;color:#161616;font-weight:bold;left:953.80px;transform-origin:0 50%;transform:scaleX(0.9153);top:52.70px;clip-path:inset(0 26% 0 0);">12th Or</span>
<span class="t" id="t21" style="font-size:8.3px;color:#161616;font-weight:bold;left:7.30px;transform:translateX(-50%) ;top:66.32px;">0</span>
<span class="t" id="t22" style="font-size:8.3px;color:#2b2b2b;left:13.60px;transform-origin:0 50%;transform:scaleX(0.7759);top:66.32px;">OBJECT</span>
<span class="t" id="t23" style="font-size:8.3px;color:#2b2b2b;right:858.80px;transform-origin:100% 50%;transform:scaleX(0.9024);top:66.32px;">Standard</span>
<span class="t" id="t24" style="font-size:8.3px;color:#161616;font-weight:bold;left:7.30px;transform:translateX(-50%) ;top:79.65px;">1</span>
<span class="t" id="t25" style="font-size:8.3px;color:#2b2b2b;right:858.80px;transform-origin:100% 50%;transform:scaleX(0.9024);top:79.65px;">Standard</span>
<span class="t" id="t26" style="font-size:8.3px;color:#161616;font-weight:bold;left:7.30px;transform:translateX(-50%) ;top:92.98px;">2</span>
<span class="t" id="t27" style="font-size:8.3px;color:#2b2b2b;right:858.80px;transform-origin:100% 50%;transform:scaleX(0.8538);top:92.98px;">Paraxial</span>
<span class="t" id="t28" style="font-size:8.3px;color:#161616;font-weight:bold;left:7.30px;transform:translateX(-50%) ;top:106.31px;">3</span>
<span class="t" id="t29" style="font-size:8.3px;color:#2b2b2b;right:858.80px;transform-origin:100% 50%;transform:scaleX(0.9024);top:106.31px;">Standard</span>
<span class="t" id="t30" style="font-size:8.3px;color:#161616;font-weight:bold;left:7.30px;transform:translateX(-50%) ;top:119.64px;">4</span>
<span class="t" id="t31" style="font-size:8.3px;color:#2b2b2b;right:858.80px;transform-origin:100% 50%;transform:scaleX(0.9167);top:119.64px;">Coordinate Break</span>
<span class="t" id="t32" style="font-size:8.3px;color:#161616;font-weight:bold;left:7.30px;transform:translateX(-50%) ;top:132.97px;">5</span>
<span class="t" id="t33" style="font-size:8.3px;color:#2b2b2b;left:13.60px;transform-origin:0 50%;transform:scaleX(0.8452);top:132.97px;">STOP (aper)</span>
<span class="t" id="t34" style="font-size:8.3px;color:#2b2b2b;right:858.80px;transform-origin:100% 50%;transform:scaleX(0.8244);top:132.97px;">Grid Sag</span>
<span class="t" id="t35" style="font-size:8.3px;color:#161616;font-weight:bold;left:7.30px;transform:translateX(-50%) ;top:146.29px;">6</span>
<span class="t" id="t36" style="font-size:8.3px;color:#2b2b2b;right:858.80px;transform-origin:100% 50%;transform:scaleX(0.9167);top:146.29px;">Coordinate Break</span>
<span class="t" id="t37" style="font-size:8.3px;color:#161616;font-weight:bold;left:7.30px;transform:translateX(-50%) ;top:159.62px;">7</span>
<span class="t" id="t38" style="font-size:8.3px;color:#2b2b2b;right:858.80px;transform-origin:100% 50%;transform:scaleX(0.9024);top:159.62px;">Standard</span>
<span class="t" id="t39" style="font-size:8.3px;color:#161616;font-weight:bold;left:7.30px;transform:translateX(-50%) ;top:172.96px;">8</span>
<span class="t" id="t40" style="font-size:8.3px;color:#2b2b2b;right:858.80px;transform-origin:100% 50%;transform:scaleX(0.8538);top:172.96px;">Paraxial</span>
<span class="t" id="t41" style="font-size:8.3px;color:#161616;font-weight:bold;left:7.30px;transform:translateX(-50%) ;top:186.28px;">9</span>
<span class="t" id="t42" style="font-size:8.3px;color:#2b2b2b;left:13.60px;transform-origin:0 50%;transform:scaleX(0.8411);top:186.28px;">IMAGE</span>
<span class="t" id="t43" style="font-size:8.3px;color:#2b2b2b;right:858.80px;transform-origin:100% 50%;transform:scaleX(0.9024);top:186.28px;">Standard</span>
<span class="t" id="t44" style="font-size:8.3px;color:#2b2b2b;right:742.10px;transform-origin:100% 50%;transform:scaleX(0.9278);top:106.31px;">intermediate focus</span>
<span class="t" id="t45" style="font-size:8.3px;color:#fff;left:127.90px;transform-origin:0 50%;transform:scaleX(0.8553);top:132.97px;">001 RS R=78.5870_ZEMAX.DAT</span>
<span class="t" id="t46" style="font-size:8.3px;color:#2b2b2b;right:705.20px;transform-origin:100% 50%;transform:scaleX(0.9756);top:66.32px;">Infinity</span>
<span class="t" id="t47" style="font-size:8.3px;color:#2b2b2b;right:705.20px;transform-origin:100% 50%;transform:scaleX(0.9756);top:79.65px;">Infinity</span>
<span class="t" id="t48" style="font-size:8.3px;color:#2b2b2b;right:705.20px;transform-origin:100% 50%;transform:scaleX(0.9756);top:106.31px;">Infinity</span>
<span class="t" id="t49" style="font-size:8.3px;color:#2b2b2b;right:705.20px;transform-origin:100% 50%;transform:scaleX(0.8936);top:132.97px;">-78.58700</span>
<span class="t" id="t50" style="font-size:8.3px;color:#2b2b2b;right:705.20px;transform-origin:100% 50%;transform:scaleX(0.9756);top:159.62px;">Infinity</span>
<span class="t" id="t51" style="font-size:8.3px;color:#2b2b2b;right:705.20px;transform-origin:100% 50%;transform:scaleX(0.9756);top:186.28px;">Infinity</span>
<span class="t" id="t52" style="font-size:8.3px;color:#2b2b2b;right:653.40px;transform-origin:100% 50%;transform:scaleX(0.9756);top:66.32px;">Infinity</span>
<span class="t" id="t53" style="font-size:8.3px;color:#2b2b2b;right:653.40px;transform-origin:100% 50%;transform:scaleX(0.8740);top:79.65px;">100.00000</span>
<span class="t" id="t54" style="font-size:8.3px;color:#2b2b2b;right:653.40px;transform-origin:100% 50%;transform:scaleX(0.8740);top:92.98px;">100.00000</span>
<span class="t" id="t55" style="font-size:8.3px;color:#2b2b2b;right:653.40px;transform-origin:100% 50%;transform:scaleX(0.8729);top:106.31px;">78.58700</span>
<span class="t" id="t56" style="font-size:8.3px;color:#2b2b2b;right:653.40px;transform-origin:100% 50%;transform:scaleX(0.8710);top:119.64px;">0.00000</span>
<span class="t" id="t57" style="font-size:8.3px;color:#2b2b2b;right:653.40px;transform-origin:100% 50%;transform:scaleX(0.8710);top:132.97px;">0.00000</span>
<span class="t" id="t58" style="font-size:8.3px;color:#2b2b2b;right:653.40px;transform-origin:100% 50%;transform:scaleX(0.8886);top:146.29px;">-78.58700</span>
<span class="t" id="t59" style="font-size:8.3px;color:#2b2b2b;right:653.40px;transform-origin:100% 50%;transform:scaleX(0.8882);top:159.62px;">-100.00000</span>
<span class="t" id="t60" style="font-size:8.3px;color:#2b2b2b;right:653.40px;transform-origin:100% 50%;transform:scaleX(0.8882);top:172.96px;">-100.00000</span>
<span class="t" id="t61" style="font-size:8.3px;color:#2b2b2b;right:653.40px;transform-origin:100% 50%;transform:scaleX(0.9401);top:186.28px;">-</span>
<span class="t" id="t62" style="font-size:8.3px;color:#2b2b2b;left:326.70px;transform-origin:0 50%;transform:scaleX(0.7752);top:146.29px;">P</span>
<span class="t" id="t63" style="font-size:8.3px;color:#2b2b2b;left:326.70px;transform-origin:0 50%;transform:scaleX(0.7752);top:159.62px;">P</span>
<span class="t" id="t64" style="font-size:8.3px;color:#2b2b2b;left:326.70px;transform-origin:0 50%;transform:scaleX(0.7752);top:172.96px;">P</span>
<span class="t" id="t65" style="font-size:8.3px;color:#2b2b2b;left:335.90px;transform-origin:0 50%;transform:scaleX(0.8379);top:132.97px;">MIRROR</span>
<span class="t" id="t66" style="font-size:8.3px;color:#2b2b2b;right:611.50px;transform-origin:100% 50%;transform:scaleX(0.9401);top:119.64px;">-</span>
<span class="t" id="t67" style="font-size:8.3px;color:#2b2b2b;right:611.50px;transform-origin:100% 50%;transform:scaleX(0.9401);top:146.29px;">-</span>
<span class="t" id="t68" style="font-size:8.3px;color:#2b2b2b;right:515.10px;transform-origin:100% 50%;transform:scaleX(0.8710);top:66.32px;">0.00000</span>
<span class="t" id="t69" style="font-size:8.3px;color:#2b2b2b;right:515.10px;transform-origin:100% 50%;transform:scaleX(0.8729);top:79.65px;">26.84922</span>
<span class="t" id="t70" style="font-size:8.3px;color:#2b2b2b;right:515.10px;transform-origin:100% 50%;transform:scaleX(0.8729);top:92.98px;">26.84922</span>
<span class="t" id="t71" style="font-size:8.3px;color:#2b2b2b;right:515.10px;transform-origin:100% 50%;transform:scaleX(0.8666);top:106.31px;">3.55271E-15</span>
<span class="t" id="t72" style="font-size:8.3px;color:#2b2b2b;right:515.10px;transform-origin:100% 50%;transform:scaleX(0.8710);top:119.64px;">0.00000</span>
<span class="t" id="t73" style="font-size:8.3px;color:#2b2b2b;right:515.10px;transform-origin:100% 50%;transform:scaleX(0.8729);top:132.97px;">21.10000</span>
<span class="t" id="t74" style="font-size:8.3px;color:#2b2b2b;right:515.10px;transform-origin:100% 50%;transform:scaleX(0.8710);top:146.29px;">0.00000</span>
<span class="t" id="t75" style="font-size:8.3px;color:#2b2b2b;right:515.10px;transform-origin:100% 50%;transform:scaleX(0.8710);top:159.62px;">0.00579</span>
<span class="t" id="t76" style="font-size:8.3px;color:#2b2b2b;right:515.10px;transform-origin:100% 50%;transform:scaleX(0.8729);top:172.96px;">26.85674</span>
<span class="t" id="t77" style="font-size:8.3px;color:#2b2b2b;right:515.10px;transform-origin:100% 50%;transform:scaleX(0.8729);top:186.28px;">26.85349</span>
<span class="t" id="t78" style="font-size:8.3px;color:#2b2b2b;left:464.30px;transform-origin:0 50%;transform:scaleX(0.7333);top:132.97px;">U</span>
<span class="t" id="t79" style="font-size:8.3px;color:#2b2b2b;right:471.80px;transform-origin:100% 50%;transform:scaleX(0.8710);top:66.32px;">0.00000</span>
<span class="t" id="t80" style="font-size:8.3px;color:#2b2b2b;right:471.80px;transform-origin:100% 50%;transform:scaleX(0.8710);top:79.65px;">0.00000</span>
<span class="t" id="t81" style="font-size:8.3px;color:#2b2b2b;right:471.80px;transform-origin:100% 50%;transform:scaleX(0.9401);top:92.98px;">-</span>
<span class="t" id="t82" style="font-size:8.3px;color:#2b2b2b;right:471.80px;transform-origin:100% 50%;transform:scaleX(0.8710);top:106.31px;">0.00000</span>
<span class="t" id="t83" style="font-size:8.3px;color:#2b2b2b;right:471.80px;transform-origin:100% 50%;transform:scaleX(0.9401);top:119.64px;">-</span>
<span class="t" id="t84" style="font-size:8.3px;color:#2b2b2b;right:471.80px;transform-origin:100% 50%;transform:scaleX(0.9401);top:132.97px;">-</span>
<span class="t" id="t85" style="font-size:8.3px;color:#2b2b2b;right:471.80px;transform-origin:100% 50%;transform:scaleX(0.9401);top:146.29px;">-</span>
<span class="t" id="t86" style="font-size:8.3px;color:#2b2b2b;right:471.80px;transform-origin:100% 50%;transform:scaleX(0.8710);top:159.62px;">0.00000</span>
<span class="t" id="t87" style="font-size:8.3px;color:#2b2b2b;right:471.80px;transform-origin:100% 50%;transform:scaleX(0.9401);top:172.96px;">-</span>
<span class="t" id="t88" style="font-size:8.3px;color:#2b2b2b;right:471.80px;transform-origin:100% 50%;transform:scaleX(0.8710);top:186.28px;">0.00000</span>
<span class="t" id="t89" style="font-size:8.3px;color:#2b2b2b;right:410.20px;transform-origin:100% 50%;transform:scaleX(0.8710);top:66.32px;">0.00000</span>
<span class="t" id="t90" style="font-size:8.3px;color:#2b2b2b;right:410.20px;transform-origin:100% 50%;transform:scaleX(0.8729);top:79.65px;">26.84922</span>
<span class="t" id="t91" style="font-size:8.3px;color:#2b2b2b;right:410.20px;transform-origin:100% 50%;transform:scaleX(0.9401);top:92.98px;">-</span>
<span class="t" id="t92" style="font-size:8.3px;color:#2b2b2b;right:410.20px;transform-origin:100% 50%;transform:scaleX(0.8666);top:106.31px;">3.55271E-15</span>
<span class="t" id="t93" style="font-size:8.3px;color:#2b2b2b;right:410.20px;transform-origin:100% 50%;transform:scaleX(0.9401);top:119.64px;">-</span>
<span class="t" id="t94" style="font-size:8.3px;color:#2b2b2b;right:410.20px;transform-origin:100% 50%;transform:scaleX(0.9401);top:132.97px;">-</span>
<span class="t" id="t95" style="font-size:8.3px;color:#2b2b2b;right:410.20px;transform-origin:100% 50%;transform:scaleX(0.9401);top:146.29px;">-</span>
<span class="t" id="t96" style="font-size:8.3px;color:#2b2b2b;right:410.20px;transform-origin:100% 50%;transform:scaleX(0.8710);top:159.62px;">0.00579</span>
<span class="t" id="t97" style="font-size:8.3px;color:#2b2b2b;right:410.20px;transform-origin:100% 50%;transform:scaleX(0.9401);top:172.96px;">-</span>
<span class="t" id="t98" style="font-size:8.3px;color:#2b2b2b;right:410.20px;transform-origin:100% 50%;transform:scaleX(0.8729);top:186.28px;">26.85349</span>
<span class="t" id="t99" style="font-size:8.3px;color:#2b2b2b;right:354.40px;transform-origin:100% 50%;transform:scaleX(0.8822);top:132.97px;">0</span>
<span class="t" id="t100" style="font-size:8.3px;color:#2b2b2b;right:289.30px;transform-origin:100% 50%;transform:scaleX(0.8740);top:92.98px;">100.00000</span>
<span class="t" id="t101" style="font-size:8.3px;color:#2b2b2b;right:289.30px;transform-origin:100% 50%;transform:scaleX(0.8710);top:119.64px;">0.00000</span>
<span class="t" id="t102" style="font-size:8.3px;color:#2b2b2b;right:289.30px;transform-origin:100% 50%;transform:scaleX(0.8710);top:132.97px;">0.00000</span>
<span class="t" id="t103" style="font-size:8.3px;color:#2b2b2b;right:289.30px;transform-origin:100% 50%;transform:scaleX(0.8710);top:146.29px;">0.00000</span>
<span class="t" id="t104" style="font-size:8.3px;color:#2b2b2b;right:289.30px;transform-origin:100% 50%;transform:scaleX(0.8740);top:172.96px;">100.00000</span>
<span class="t" id="t105" style="font-size:8.3px;color:#2b2b2b;left:690.20px;transform-origin:0 50%;transform:scaleX(0.7752);top:92.98px;">P</span>
<span class="t" id="t106" style="font-size:8.3px;color:#2b2b2b;left:690.20px;transform-origin:0 50%;transform:scaleX(0.7752);top:172.96px;">P</span>
<span class="t" id="t107" style="font-size:8.3px;color:#2b2b2b;right:227.70px;transform-origin:100% 50%;transform:scaleX(0.8822);top:92.98px;">2</span>
<span class="t" id="t108" style="font-size:8.3px;color:#2b2b2b;right:227.70px;transform-origin:100% 50%;transform:scaleX(0.8710);top:119.64px;">0.00000</span>
<span class="t" id="t109" style="font-size:8.3px;color:#2b2b2b;right:227.70px;transform-origin:100% 50%;transform:scaleX(0.8710);top:132.97px;">0.00000</span>
<span class="t" id="t110" style="font-size:8.3px;color:#2b2b2b;right:227.70px;transform-origin:100% 50%;transform:scaleX(0.8710);top:146.29px;">0.00000</span>
<span class="t" id="t111" style="font-size:8.3px;color:#2b2b2b;right:227.70px;transform-origin:100% 50%;transform:scaleX(0.8822);top:172.96px;">2</span>
<span class="t" id="t112" style="font-size:8.3px;color:#2b2b2b;right:165.40px;transform-origin:100% 50%;transform:scaleX(0.8710);top:119.64px;">0.00000</span>
<span class="t" id="t113" style="font-size:8.3px;color:#2b2b2b;right:103.50px;transform-origin:100% 50%;transform:scaleX(0.8710);top:119.64px;">0.00000</span>
<span class="t" id="t114" style="font-size:8.3px;color:#2b2b2b;right:165.40px;transform-origin:100% 50%;transform:scaleX(0.8710);top:132.97px;">0.00000</span>
<span class="t" id="t115" style="font-size:8.3px;color:#2b2b2b;right:103.50px;transform-origin:100% 50%;transform:scaleX(0.8710);top:132.97px;">0.00000</span>
<span class="t" id="t116" style="font-size:8.3px;color:#2b2b2b;right:165.40px;transform-origin:100% 50%;transform:scaleX(0.8710);top:146.29px;">0.00000</span>
<span class="t" id="t117" style="font-size:8.3px;color:#2b2b2b;right:103.50px;transform-origin:100% 50%;transform:scaleX(0.8710);top:146.29px;">0.00000</span>
<span class="t" id="t118" style="font-size:8.3px;color:#2b2b2b;right:37.20px;transform-origin:100% 50%;transform:scaleX(0.8740);top:119.64px;">180.00000</span>
<span class="t" id="t119" style="font-size:8.3px;color:#2b2b2b;right:37.20px;transform-origin:100% 50%;transform:scaleX(0.8710);top:132.97px;">0.00000</span>
<span class="t" id="t120" style="font-size:8.3px;color:#2b2b2b;right:37.20px;transform-origin:100% 50%;transform:scaleX(0.8882);top:146.29px;">-180.00000</span>
<span class="t" id="t121" style="font-size:8.3px;color:#2b2b2b;left:942.90px;transform-origin:0 50%;transform:scaleX(0.7752);top:146.29px;">P</span>
<span class="t" id="t122" style="font-size:8.1px;color:#20242c;left:25.00px;transform-origin:0 50%;transform:scaleX(0.7864);top:217.60px;">2: 3D Layout</span>
<span class="t" id="t123" style="font-size:8.1px;color:#2b2b2b;left:14.60px;transform-origin:0 50%;transform:scaleX(0.8000);top:231.90px;">Settings</span>
<span class="t" id="t124" style="font-size:8.1px;color:#2b2b2b;left:309.80px;transform-origin:0 50%;transform:scaleX(0.7856);top:231.90px;">Line Thickness</span>
<span class="t" id="t125" style="font-size:8.1px;color:#222;left:17.00px;transform-origin:0 50%;transform:scaleX(0.8089);top:475.90px;">Graph</span>
<span class="t" id="t126" style="font-size:8.1px;color:#222;left:50.80px;transform-origin:0 50%;transform:scaleX(0.7511);top:475.90px;">Classic</span>
</div>
</body></html>
